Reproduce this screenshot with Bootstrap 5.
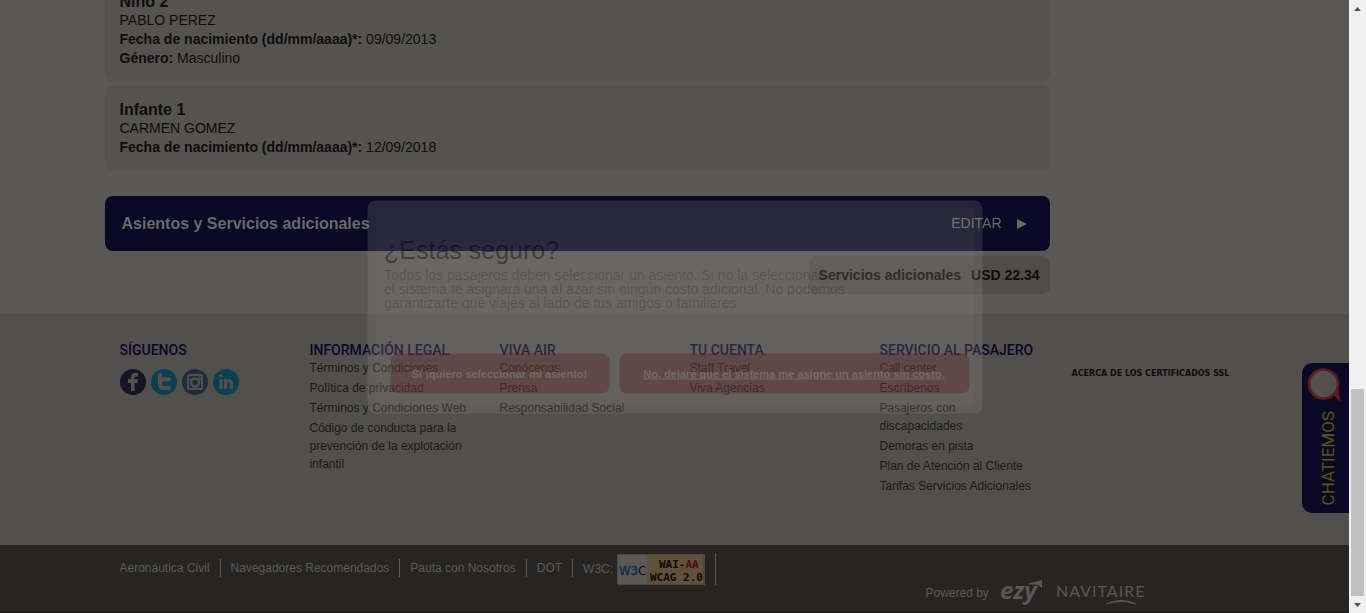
<!DOCTYPE html>
<html lang="es">
<head>
<meta charset="utf-8">
<meta name="viewport" content="width=device-width, initial-scale=1">
<title>Viva Air - Asientos y servicios</title>
<link href="https://cdn.jsdelivr.net/npm/bootstrap@5.3.0/dist/css/bootstrap.min.css" rel="stylesheet">
<style>
  body { font-family: "Liberation Sans", Arial, sans-serif; font-size: 14px; line-height: 19px; color: #0e0c0d; background: #5a5854; }
  a { color: inherit; text-decoration: none; }
  .page-view { height: 100vh; }
  .page-col { min-width: 0; background: #5a5854; }
  .wrap { width: 100%; max-width: 1140px; margin: 0 auto; }
  .booking { max-width: 945px; }
  .pax { background: #555350; border-radius: 8px; padding: 14px 15px 13px; margin-bottom: 5px; }
  .pax h2 { font-size: 16px; line-height: 19px; font-weight: 700; margin: 0; }
  .pax p { margin: 0; }
  .pax.last-pax { margin-bottom: 26px; }
  .section-bar { background: #090825; color: #6b6865; border-radius: 8px; padding: 18px 17px; }
  .section-bar h2 { font-size: 16px; line-height: 19px; font-weight: 700; margin: 0; }
  .edit-link { gap: 15px; padding-right: 6px; }
  .chip { background: #4f4d4a; border-radius: 8px; padding: 10px 10px 9px; gap: 10px; margin: 5px 0 20px; font-weight: 700; }
  .foot { background: #52504d; padding: 27px 0 48px; }
  .foot h3 { font-size: 14px; line-height: 18px; font-weight: 500; color: #07052a; margin: 0; white-space: nowrap; font-family: Roboto, sans-serif; }
  .foot .row > div { padding: 0 15px; }
  .foot ul, .legal ul { list-style: none; margin: 0; padding: 0; }
  .foot li { font-size: 12px; line-height: 18px; margin-bottom: 2px; color: #1b1919; }
  .social { gap: 5px; padding-top: 10px; }
  .ssl { font: 700 8px/12px "DejaVu Sans", sans-serif; white-space: nowrap; display: block; padding: 27px 0 0 2px; }
  .legal { background: #272523; color: #5b5957; font-size: 12px; padding: 8px 0 5px; border-bottom: 1px solid #1d1817; }
  .legal .wrap { padding: 0 15px; }
  .legal li { border-right: 1px solid #5b5957; padding-right: 10px; margin-right: 10px; line-height: 18px; margin-top: 6px; }
  .legal li.w3c { margin-top: 0; height: 32px; }
  .powered { gap: 12px; padding-left: 806px; margin-top: -6px; }
  .powered svg { overflow: visible; }
  .confirm { width: 615px; top: 50%; left: 50%; transform: translate(-50%, -50%); background: rgba(153,148,143,.2); border-radius: 8px; padding: 8px; }
  .confirm-body { background: rgba(255,250,245,.02); padding: 25px 5px 12px 9px; }
  .confirm h1 { font-size: 25px; line-height: 32px; font-weight: 400; color: rgba(5,0,12,.42); margin: 0; }
  .confirm p { font-size: 14px; line-height: 14px; color: rgba(10,8,8,.2); margin: 2px 0 44px; white-space: nowrap; }
  .confirm .actions { gap: 10px; }
  .confirm button { border: 0; border-radius: 8px; background: rgba(88,22,24,.33); color: #716b68; font-size: 11px; font-weight: 700; line-height: 18px; padding: 11px 0; }
  .choose { width: 219px; }
  .skip { width: 350px; text-decoration: underline; }
  .chat { top: 363px; right: 0; width: 47px; height: 150px; border: 0; padding: 4px 0 8px; background: #090825; border-radius: 10px 0 0 10px; color: #5b560c; }
  .chat-label { writing-mode: vertical-rl; transform: rotate(180deg); font: 400 17px/26px Roboto, sans-serif; margin-right: 8px; }
  .scroll-track { width: 17px; flex: none; background: #f0f0f0; }
  .scroll-thumb { background: #c1c1c1; margin: auto 2px 0; height: 207px; }
</style>
</head>
<body>
<div class="page-view d-flex overflow-hidden">
  <div class="page-col position-relative flex-grow-1 d-flex flex-column justify-content-end overflow-hidden">
    <main class="wrap">
      <div class="booking">
        <section class="pax">
          <h2>Niño 2</h2>
          <p>PABLO PEREZ</p>
          <p><b>Fecha de nacimiento (dd/mm/aaaa)*:</b> 09/09/2013</p>
          <p><b>Género:</b> Masculino</p>
        </section>
        <section class="pax last-pax">
          <h2>Infante 1</h2>
          <p>CARMEN GOMEZ</p>
          <p><b>Fecha de nacimiento (dd/mm/aaaa)*:</b> 12/09/2018</p>
        </section>
        <section class="section-bar d-flex justify-content-between">
          <h2>Asientos y Servicios adicionales</h2>
          <a href="#" class="edit-link d-flex align-items-center">EDITAR
            <svg width="10" height="11" viewBox="0 0 10 11"><path d="M0 1 10 6 0 11z" fill="#6b6865"/></svg></a>
        </section>
        <div class="d-flex justify-content-end"><div class="chip d-flex"><span>Servicios adicionales</span><span>USD 22.34</span></div></div>
      </div>
    </main>
    <footer>
      <div class="foot">
        <div class="wrap"><div class="row g-0">
          <div class="col-2">
            <h3>SÍGUENOS</h3>
            <div class="social d-flex">
              <a href="#" aria-label="Facebook"><svg width="26" height="26" viewBox="0 0 26 26"><circle cx="13" cy="13" r="13" fill="#171425"/><path d="M11 22v-8H8v-4h3V8q0-4 4-4h3v3.500h-2q-1.500 0-1.500 1.500v1H18l-.5 4h-3v8z" fill="#52504d"/></svg></a>
              <a href="#" aria-label="Twitter"><svg width="26" height="26" viewBox="0 0 26 26"><circle cx="13" cy="13" r="13" fill="#0b3f54"/><path d="M9 6v9q0 4 5 4h4M9 10.500h9" fill="none" stroke="#52504d" stroke-width="4" stroke-linecap="round"/></svg></a>
              <a href="#" aria-label="Instagram"><svg width="26" height="26" viewBox="0 0 26 26"><circle cx="13" cy="13" r="13" fill="#202c3a"/><rect x="6" y="6" width="14" height="14" rx="1" fill="none" stroke="#52504d" stroke-width="2"/><circle cx="13" cy="13.500" r="4" fill="none" stroke="#52504d" stroke-width="2.500"/><path d="M6 10.500h4M16 10.500h4" stroke="#52504d" stroke-width="1.500"/><circle cx="17.500" cy="8.500" r="1.300" fill="#52504d"/></svg></a>
              <a href="#" aria-label="LinkedIn"><svg width="26" height="26" viewBox="0 0 26 26"><circle cx="13" cy="13" r="13" fill="#0b3f54"/><path d="M8 10v10M12.500 20V10M12.500 15q0-3.500 3-3.500t3 3.500v5" fill="none" stroke="#52504d" stroke-width="3"/><circle cx="8" cy="6.800" r="1.900" fill="#52504d"/></svg></a>
            </div>
          </div>
          <div class="col-2"><h3>INFORMACIÓN LEGAL</h3>
            <ul><li><a href="#">Términos y Condiciones</a></li><li><a href="#">Política de privacidad</a></li><li><a href="#">Términos y Condiciones Web</a></li><li><a href="#">Código de conducta para la prevención de la explotación infantil</a></li></ul></div>
          <div class="col-2"><h3>VIVA AIR</h3>
            <ul><li><a href="#">Conócenos</a></li><li><a href="#">Prensa</a></li><li><a href="#">Responsabilidad Social</a></li></ul></div>
          <div class="col-2"><h3>TU CUENTA</h3>
            <ul><li><a href="#">Staff Travel</a></li><li><a href="#">Viva Agencias</a></li></ul></div>
          <div class="col-2"><h3>SERVICIO AL PASAJERO</h3>
            <ul><li><a href="#">Call center</a></li><li><a href="#">Escríbenos</a></li><li><a href="#">Pasajeros con<br>discapacidades</a></li><li><a href="#">Demoras en pista</a></li><li><a href="#">Plan de Atención al Cliente</a></li><li><a href="#">Tarifas Servicios Adicionales</a></li></ul></div>
          <div class="col-2"><a href="#" class="ssl">ACERCA DE LOS CERTIFICADOS SSL</a></div>
        </div></div>
      </div>
      <div class="legal"><div class="wrap">
        <ul class="d-flex align-items-start">
          <li><a href="#">Aeronáutica Civil</a></li><li><a href="#">Navegadores Recomendados</a></li><li><a href="#">Pauta con Nosotros</a></li><li><a href="#">DOT</a></li>
          <li class="w3c d-flex align-items-center"><a href="#" class="d-flex align-items-center gap-1">W3C:
            <svg width="88" height="31" viewBox="0 0 88 31"><path d="M0 0h88v31H0z" fill="#4b4945"/><path d="M1 1h29v29H1z" fill="#5b5956"/><path d="M30 1h56v29H30z" fill="#615038"/>
              <text x="2" y="21" font-family="DejaVu Sans Condensed" font-size="13" fill="#12304d" stroke="#12304d" stroke-width=".5">W3<tspan fill="#111" stroke="none">C</tspan></text>
              <g font-family="DejaVu Sans Mono" font-size="11" font-weight="700"><text x="42" y="14" fill="#0b0a08">WAI-<tspan fill="#4b1017">AA</tspan></text><text x="33" y="27" fill="#0b0a08">WCAG 2.0</text></g></svg></a></li>
        </ul>
        <div class="powered d-flex align-items-center"><span>Powered by</span>
          <svg width="147" height="28" viewBox="0 0 147 28"><g fill="#595755"><text x="-1" y="20" font-family="Open Sans" font-size="24" font-style="italic" font-weight="700">ezy</text><path d="M26 5 41 1v8l-4-3z"/><text x="55" y="18" font-family="Lato" font-size="16" letter-spacing="1">NAVITAIRE</text></g><path d="M105 25q15-7 30 0-15-5-30 0z" fill="#595755" stroke="#595755"/></svg>
        </div>
      </div></div>
    </footer>
    <div class="confirm position-absolute" role="dialog" aria-labelledby="ask">
      <div class="confirm-body">
        <h1 id="ask">¿Estás seguro?</h1>
        <p>Todos los pasajeros deben seleccionar un asiento. Si no la seleccionas,<br>el sistema te asignará una al azar sin ningún costo adicional. No podemos<br>garantizarte que viajes al lado de tus amigos o familiares.</p>
        <div class="actions d-flex justify-content-end"><button type="button" class="choose">Sí ¡quiero seleccionar mi asiento!</button><button type="button" class="skip">No, dejaré que el sistema me asigne un asiento sin costo.</button></div>
      </div>
    </div>
    <button type="button" class="chat position-absolute d-flex flex-column justify-content-between align-items-end">
      <svg width="47" height="36" viewBox="0 4 47 36"><path d="M31 30l6 6-2-12z" fill="#5b1b20" stroke="#5b1b20" stroke-width="2"/><circle cx="21.500" cy="21" r="14.500" fill="#52504d" stroke="#5b1b20" stroke-width="2.500"/></svg>
      <span class="chat-label">CHATIEMOS</span>
    </button>
  </div>
  <div class="scroll-track d-flex flex-column"><svg width="17" height="17" viewBox="0 0 17 17"><path d="M5 11 8.500 7 12 11z" fill="#505050"/></svg><div class="scroll-thumb"></div><svg width="17" height="17" viewBox="0 0 17 17"><path d="M5 7 8.500 11 12 7z" fill="#505050"/></svg></div>
</div>
<script src="https://cdn.jsdelivr.net/npm/bootstrap@5.3.0/dist/js/bootstrap.bundle.min.js"></script>
</body>
</html>
